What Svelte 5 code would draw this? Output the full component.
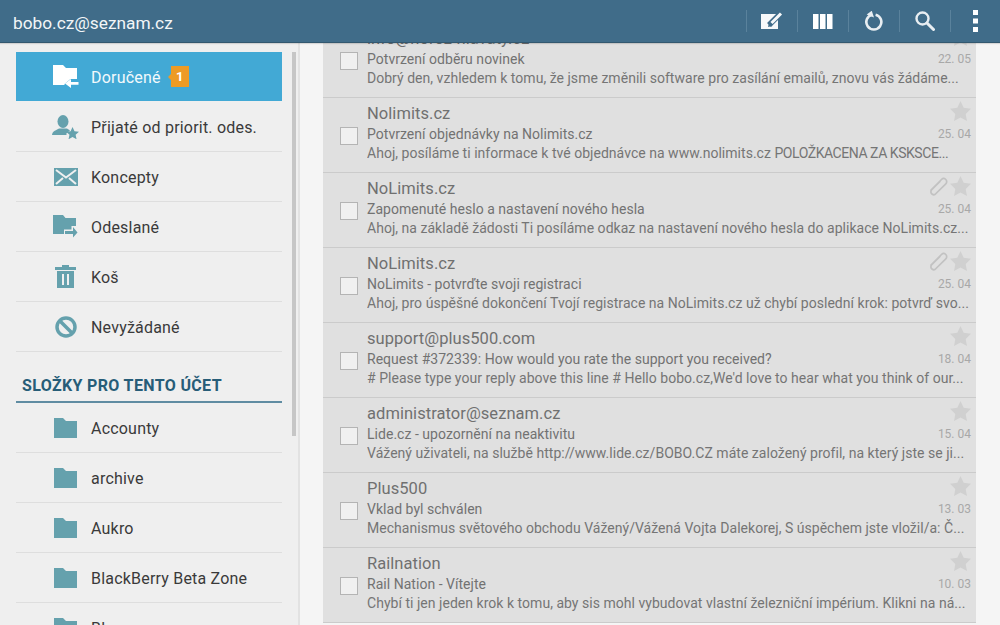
<script>
  const folderRows = [
    { name: 'Přijaté od priorit. odes.', icon: 'prio' },
    { name: 'Koncepty', icon: 'mail' },
    { name: 'Odeslané', icon: 'sent' },
    { name: 'Koš', icon: 'trash' },
    { name: 'Nevyžádané', icon: 'spam' }
  ];
  const accountFolders = ['Accounty', 'archive', 'Aukro', 'BlackBerry Beta Zone', 'Blog'];
  const mails = [
    { from: 'info@horoz-hlavaty.cz', subject: 'Potvrzení odběru novinek', date: '22. 05', text: 'Dobrý den, vzhledem k tomu, že jsme změnili software pro zasílání emailů, znovu vás žádáme...' },
    { from: 'Nolimits.cz', subject: 'Potvrzení objednávky na Nolimits.cz', date: '25. 04', text: 'Ahoj, posíláme ti informace k tvé objednávce na www.nolimits.cz ', caps: 'POLOŽKACENA ZA KSKSCE...' },
    { from: 'NoLimits.cz', subject: 'Zapomenuté heslo a nastavení nového hesla', date: '25. 04', clip: true, text: 'Ahoj, na základě žádosti Ti posíláme odkaz na nastavení nového hesla do aplikace NoLimits.cz...' },
    { from: 'NoLimits.cz', subject: 'NoLimits - potvrďte svoji registraci', date: '25. 04', clip: true, text: 'Ahoj, pro úspěšné dokončení Tvojí registrace na NoLimits.cz už chybí poslední krok: potvrď svo...' },
    { from: 'support@plus500.com', subject: 'Request #372339: How would you rate the support you received?', date: '18. 04', text: "# Please type your reply above this line # Hello bobo.cz,We'd love to hear what you think of our..." },
    { from: 'administrator@seznam.cz', subject: 'Lide.cz - upozornění na neaktivitu', date: '15. 04', text: 'Vážený uživateli, na službě http://www.lide.cz/BOBO.CZ máte založený profil, na který jste se ji...' },
    { from: 'Plus500', subject: 'Vklad byl schválen', date: '13. 03', text: 'Mechanismus světového obchodu Vážený/Vážená Vojta Dalekorej, S úspěchem jste vložil/a: Č...' },
    { from: 'Railnation', subject: 'Rail Nation - Vítejte', date: '10. 03', text: 'Chybí ti jen jeden krok k tomu, aby sis mohl vybudovat vlastní železniční impérium. Klikni na ná...' }
  ];
</script>

<div class="app">
  <header class="bar">
    <div class="account">bobo.cz@seznam.cz</div>
    <div class="actions">
      <button class="action" aria-label="Napsat">
        <svg width="24" height="20" viewBox="0 0 24 20"><path d="M1 3h17v15H1z" fill="#f7f9fa"/><path d="M23 0 9 14" stroke="#406c89" stroke-width="5.500"/><path d="M21 2.500 11.500 12" stroke="#f7f9fa" stroke-width="3"/><path d="m8 16 1-4.500 3.500 3.500z" fill="#406c89"/></svg>
      </button>
      <button class="action" aria-label="Sloupce">
        <svg width="20" height="15" viewBox="0 0 20 15"><path d="M0 0h5.500v15H0zM7 0h5.500v15H7zM14 0h5.500v15H14z" fill="#fff"/></svg>
      </button>
      <button class="action" aria-label="Obnovit">
        <svg width="20" height="20" viewBox="0 0 20 20"><path d="M8.500 3.300A7.500 7.500 0 1 0 12 3.300" fill="none" stroke="#e8eef2" stroke-width="2.600" transform="translate(-.4 .4)"/><path d="M3 2.500 9 .5v7.200z" fill="#e8eef2" transform="rotate(-18 6 4)"/></svg>
      </button>
      <button class="action" aria-label="Hledat">
        <svg width="20" height="20" viewBox="0 0 20 20"><circle cx="7.500" cy="7.500" r="6" fill="none" stroke="#e8eef2" stroke-width="2.400"/><path d="m12 12 6.500 6.500" stroke="#e8eef2" stroke-width="3" stroke-linecap="round"/></svg>
      </button>
      <button class="action" aria-label="Více">
        <svg width="6" height="22" viewBox="0 0 6 22"><path d="M0 0h5v5H0zM0 8.500h5v5H0zM0 17h5v5H0z" fill="#fff"/></svg>
      </button>
    </div>
  </header>

  <div class="body">
    <aside class="side">
      <div class="side-inner">
        <div class="row active">
          <span class="icon">
            <svg width="26" height="24" viewBox="0 0 26 24"><path d="M0 0h10l3 3h11v11h-6.500l-6 5v1H0z" fill="#fff"/><path d="m12 18.500 6-4.500v2.900h7.500v2.800H18V23z" fill="#fff"/></svg>
          </span>
          <span class="label">Doručené</span>
          <span class="badge">1</span>
        </div>
        {#each folderRows as row}
          <div class="row">
            <span class="icon">
              {#if row.icon === 'prio'}
                <svg width="27" height="24" viewBox="0 0 27 24"><ellipse cx="11" cy="6.500" rx="5.500" ry="6.500" fill="#65a1ad"/><path d="M0 20c0-4 5-5 7-6.500h8c1 .7 2 1.200 3 1.700L14 19l1 1z" fill="#65a1ad"/><path d="m20.500 12 2 4.300 4.500.5-3.400 3 1 4.500-4.100-2.400-4 2.400 1-4.500-3.400-3 4.500-.5z" fill="#65a1ad"/></svg>
              {:else if row.icon === 'mail'}
                <svg width="24" height="18" viewBox="0 0 24 18"><path d="M0 0h24v18H0z" fill="#65a1ad"/><path d="m2 2 10 7.500L22 2M2 16l7-6M22 16l-7-6" fill="none" stroke="#f0f0f0" stroke-width="2"/></svg>
              {:else if row.icon === 'sent'}
                <svg width="25" height="23" viewBox="0 0 25 23"><path d="M0 0h10l2.500 3H23v8h-4.500v3.500H11V19H0z" fill="#65a1ad"/><path d="M12 16h8v-4l4.500 5.500-4.500 5v-3.500h-8z" fill="#65a1ad"/></svg>
              {:else if row.icon === 'trash'}
                <svg width="21" height="23" viewBox="0 0 21 23"><path d="M0 2h7V0h7v2h7v3H0zM2 6h17v17H2z" fill="#65a1ad"/><path d="M7 9h2v11H7zM12 9h2v11h-2z" fill="#f0f0f0"/></svg>
              {:else}
                <svg width="22" height="22" viewBox="0 0 22 22"><circle cx="11" cy="11" r="9" fill="none" stroke="#65a1ad" stroke-width="3.500"/><path d="m4.500 4.500 13 13" stroke="#65a1ad" stroke-width="3.500"/></svg>
              {/if}
            </span>
            <span class="label">{row.name}</span>
          </div>
        {/each}
        <h2 class="section">SLOŽKY PRO TENTO ÚČET</h2>
        {#each accountFolders as name}
          <div class="row">
            <span class="icon">
              <svg width="23" height="20" viewBox="0 0 23 20"><path d="M0 0h9l3 3h11v17H0z" fill="#65a1ad"/></svg>
            </span>
            <span class="label">{name}</span>
          </div>
        {/each}
      </div>
      <div class="scroll"></div>
    </aside>

    <main class="content">
      <div class="list">
        {#each mails as m}
          <article class="mail">
            <span class="check"></span>
            <div class="texts">
              <div class="from">{m.from}</div>
              <div class="subject">{m.subject}</div>
              <div class="preview">{m.text}{#if m.caps}<span class="caps">{m.caps}</span>{/if}</div>
            </div>
            <div class="meta">
              <div class="marks">
                {#if m.clip}
                  <svg width="19" height="19" viewBox="0 0 19 19"><path d="M2 13 12.500 2.500a3 3 0 0 1 4.300 4.300L7 16.500a2.200 2.200 0 0 1-4.500-3.500l8.500-8.500" fill="none" stroke="#c2c2c2" stroke-width="1.700" stroke-linecap="round"/></svg>
                {/if}
                <svg width="21" height="20" viewBox="0 0 21 20"><path d="m10.500 0 3.200 6.700 7.300 1-5.300 5.200 1.300 7.100-6.500-3.500L4 20l1.300-7.100L0 7.700l7.300-1z" fill="#d0d0d0"/></svg>
              </div>
              <div class="date">{m.date}</div>
            </div>
          </article>
        {/each}
      </div>
    </main>
  </div>
</div>

<style>
  :global(body) { margin: 0; }
  .app {
    width: 1000px;
    height: 625px;
    overflow: hidden;
    display: flex;
    flex-direction: column;
    font-family: Roboto, "Liberation Sans", sans-serif;
    background: #f5f5f5;
  }
  .bar {
    height: 42px;
    flex: none;
    display: flex;
    align-items: center;
    justify-content: space-between;
    background: #406c89;
    border-bottom: 1px solid #33586f;
    position: relative;
    z-index: 2;
    box-shadow: 0 1px 1px rgba(0,0,0,.12);
  }
  .account {
    margin-left: 13px;
    margin-top: 3px;
    color: #f2f6f8;
    font-size: 17.300px;
  }
  .actions { display: flex; align-items: center; }
  .action {
    width: 51px;
    height: 22px;
    padding: 0;
    border: 0;
    background: none;
    border-left: 1px solid #5a829c;
    display: flex;
    align-items: center;
    justify-content: center;
  }
  .action:last-child { width: 50px; }
  .body { flex: 1; display: flex; min-height: 0; }
  .side {
    width: 298px;
    flex: none;
    background: #efefef;
    border-right: 2px solid #e2e2e2;
    position: relative;
    overflow: hidden;
  }
  .side-inner {
    width: 266px;
    margin-left: 16px;
    padding-top: 9px;
  }
  .scroll {
    position: absolute;
    left: 292px;
    top: 9px;
    width: 4px;
    height: 384px;
    background: #c6c6c6;
  }
  .row {
    height: 49px;
    border-bottom: 1px solid #dedede;
    display: flex;
    align-items: center;
  }
  .active {
    background: #42a9d5;
    background-clip: padding-box;
    border-bottom-color: transparent;
  }
  .icon {
    width: 75px;
    flex: none;
    display: flex;
    justify-content: center;
    align-items: center;
    padding-left: 24px;
    box-sizing: border-box;
  }
  .label {
    font-size: 16px;
    color: #3a3a3a;
    letter-spacing: .2px;
    margin-top: 2px;
  }
  .active .label { color: #f2f9fc; }
  .badge {
    margin-left: 10px;
    width: 18px;
    height: 21px;
    background: #ed9b24;
    color: #fff;
    font-size: 13px;
    font-weight: 700;
    text-align: center;
    line-height: 21px;
    position: relative;
  }
  .badge::before {
    content: "";
    position: absolute;
    left: -3px;
    top: 8px;
    border-style: solid;
    border-width: 3px 3px 3px 0;
    border-color: transparent #ed9b24 transparent transparent;
  }
  .section {
    margin: 0;
    height: 51px;
    box-sizing: border-box;
    padding: 24px 0 0 6px;
    font-size: 16px;
    line-height: 19px;
    font-weight: 700;
    color: #275d78;
    border-bottom: 2px solid #5f8ca2;
    letter-spacing: .35px;
  }
  .content {
    flex: 1;
    min-width: 0;
    padding: 0 24px 0 23px;
    overflow: hidden;
  }
  .list { margin-top: -20px; background: #e0e0e0; }
  .mail {
    height: 74px;
    border-bottom: 1px solid #cbcbcb;
    position: relative;
    display: flex;
  }
  .check {
    flex: none;
    width: 16px;
    height: 16px;
    margin: 29px 0 0 17px;
    background: #f0f0f0;
    border: 1px solid #b4b4b4;
  }
  .texts { margin-left: 9px; min-width: 0; flex: 1; padding-right: 6px; padding-top: 5px; }
  .from { font-size: 16.500px; line-height: 21px; color: #707070; letter-spacing: .05px; }
  .subject { font-size: 14px; line-height: 19px; color: #727272; height: 19px; margin-top: 1px; letter-spacing: .03px; }
  .preview { font-size: 14px; line-height: 19px; color: #757575; white-space: nowrap; overflow: hidden; letter-spacing: .03px; }
  .caps { letter-spacing: -.45px; }
  .meta {
    position: absolute;
    right: 5px;
    top: 3px;
    text-align: right;
  }
  .marks { display: flex; justify-content: flex-end; align-items: center; gap: 2px; height: 20px; }
  .date { font-size: 12px; color: #a8a8a8; margin-top: 6px; }
</style>
